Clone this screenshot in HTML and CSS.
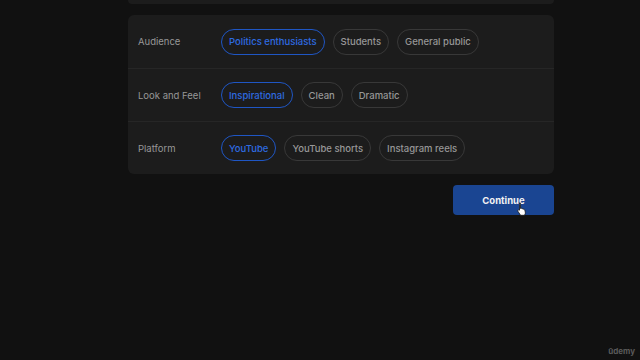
FILE: index.html
```html
<!DOCTYPE html>
<html lang="en">
<head>
    <meta charset="UTF-8">
    <title>Video Brief</title>
    <link rel="stylesheet" href="styles.css">
</head>
<body>
    <div class="page">
        <div class="card card-prev"></div>
        <div class="card options">
            <div class="opt-row">
                <div class="opt-label">Audience</div>
                <div class="pills">
                    <span class="pill active">Politics enthusiasts</span>
                    <span class="pill">Students</span>
                    <span class="pill">General public</span>
                </div>
            </div>
            <div class="opt-row">
                <div class="opt-label">Look and Feel</div>
                <div class="pills">
                    <span class="pill active">Inspirational</span>
                    <span class="pill">Clean</span>
                    <span class="pill">Dramatic</span>
                </div>
            </div>
            <div class="opt-row">
                <div class="opt-label">Platform</div>
                <div class="pills">
                    <span class="pill active">YouTube</span>
                    <span class="pill">YouTube shorts</span>
                    <span class="pill">Instagram reels</span>
                </div>
            </div>
        </div>
        <div class="actions">
            <button class="continue-btn">Continue
                <svg class="cursor" width="12" height="14" viewBox="0 0 12 14">
                    <path d="M3.5 1.2c.6 0 1 .4 1 1v4.3l.3-.1c.5-.3 1.1 0 1.3.4.5-.3 1.1-.1 1.3.4.5-.2 1.1 0 1.3.5l.6 2.4c.2.9 0 1.7-.5 2.4l-.6.8H4.6L2 9.4c-.4-.5-.3-1.1.2-1.4.4-.3 1-.2 1.3.2V2.2c0-.6.4-1 1-1z" fill="#fff" stroke="#111" stroke-width=".8"/>
                </svg>
            </button>
        </div>
    </div>
    <div class="watermark">ūdemy</div>
</body>
</html>
```

FILE: styles.css
```css
body {
    margin: 0;
    background: #111111;
    font-family: Inter, 'Liberation Sans', Arial, sans-serif;
    width: 640px;
    height: 360px;
    overflow: hidden;
    position: relative;
}
.page {
    width: 426px;
    margin-left: 128px;
    display: flex;
    flex-direction: column;
}
.card {
    background: #1c1c1c;
    border-radius: 6px;
}
.card-prev {
    height: 4px;
    border-radius: 0 0 6px 6px;
    margin-bottom: 11px;
}
.opt-row {
    display: flex;
    align-items: center;
    height: 53px;
    padding: 0 10px;
    border-top: 1px solid #262626;
    box-sizing: border-box;
}
.opt-row:first-child {
    border-top: none;
}
.opt-label {
    width: 83px;
    flex-shrink: 0;
    color: #979797;
    font-size: 9.5px;
}
.pills {
    display: flex;
    gap: 8px;
}
.pill {
    display: inline-flex;
    align-items: center;
    height: 26px;
    box-sizing: border-box;
    padding: 0 7px;
    border: 1px solid #383838;
    border-radius: 13px;
    color: #979797;
    font-size: 9.5px;
    font-weight: 500;
}
.pill.active {
    border-color: #1f56c4;
    color: #2e6be0;
}
.actions {
    display: flex;
    justify-content: flex-end;
    margin-top: 11px;
}
.continue-btn {
    position: relative;
    width: 101px;
    height: 30px;
    border: none;
    border-radius: 4px;
    background: #1a4592;
    color: #f2f2f2;
    font-family: Inter, 'Liberation Sans', Arial, sans-serif;
    font-size: 9.5px;
    font-weight: 700;
    cursor: pointer;
}
.cursor {
    position: absolute;
    left: 63px;
    top: 17px;
}
.watermark {
    position: absolute;
    right: 5px;
    bottom: 4px;
    color: #5a5a5a;
    font-size: 8px;
    font-weight: 700;
}
```
